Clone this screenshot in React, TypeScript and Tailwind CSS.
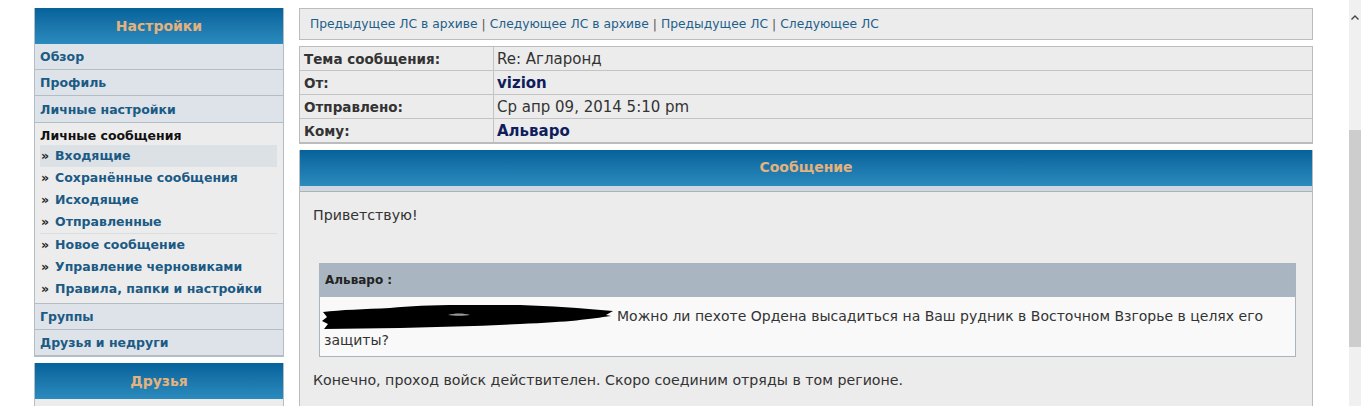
import React from "react";

const verdana = "font-['DejaVu_Sans',Verdana,sans-serif]";
const headerBar =
  "bg-gradient-to-b from-[#05629a] to-[#2b8bbd] text-[#e4b27e] font-bold text-[14px] flex items-center justify-center";

function SideRow({ label, tall = false }: { label: string; tall?: boolean }) {
  return (
    <div
      className={`${tall ? "h-[27px]" : "h-[26px]"} flex items-center pt-[2px] px-[5px] bg-[#dde3e8] border-b border-[#b3bdc6] text-[#1b5a84] font-bold text-[12.5px]`}
    >
      {label}
    </div>
  );
}

function SubLink({ label, active = false }: { label: string; active?: boolean }) {
  return (
    <div
      className={`h-[22px] flex items-center font-bold text-[12.5px] text-[#1b5a84] ${
        active ? "bg-[#dce1e5]" : ""
      }`}
    >
      <span className="text-[#222] mr-[6px] ml-[1px]">»</span>
      {label}
    </div>
  );
}

function Redacted() {
  return (
    <svg
      width="294"
      height="26"
      viewBox="0 0 294 26"
      className="inline-block align-middle -my-[6px] -ml-[4px] mr-[3px]"
    >
      <path
        d="M3 8 C20 6 45 5 70 4 C90 2 110 1 140 1 L200 1 C230 2 260 4 293 7 L286 11 L291 12 C270 15 250 18 200 20 C160 22 120 23 80 24 L4 25 L8 20 L2 17 L7 13 Z"
        fill="#000"
      />
      <path d="M128 11 C134 9 144 9 150 11 C144 12 134 12 128 11 Z" fill="#9a9a9a" />
    </svg>
  );
}

export default function App() {
  return (
    <div className={`h-[406px] w-[1361px] overflow-hidden bg-white flex ${verdana}`}>
      {/* Sidebar */}
      <div className="ml-[34px] mt-[8px] w-[250px] flex flex-col">
        <div className="border border-[#b3bdc6] border-t-0">
          <div className={`${headerBar} h-[36px]`}>Настройки</div>
          <SideRow label="Обзор" />
          <SideRow label="Профиль" />
          <SideRow label="Личные настройки" tall />
          <div className="bg-[#ececec] border-b border-[#b3bdc6] px-[5px] pt-[4px] h-[181px]">
            <div className="h-[18px] flex items-center font-bold text-[12.5px] text-[#111]">Личные сообщения</div>
            <div className="pr-[1px]">
              <SubLink label="Входящие" active />
              <SubLink label="Сохранённые сообщения" />
              <SubLink label="Исходящие" />
              <div className="border-b border-[#d8dde2]">
                <SubLink label="Отправленные" />
              </div>
              <SubLink label="Новое сообщение" />
              <SubLink label="Управление черновиками" />
              <SubLink label="Правила, папки и настройки" />
            </div>
          </div>
          <SideRow label="Группы" />
          <SideRow label="Друзья и недруги" />
        </div>
        <div className="mt-[6px] border border-[#b3bdc6] border-t-0">
          <div className={`${headerBar} h-[36px]`}>Друзья</div>
          <div className="h-[20px] bg-[#ececec]" />
        </div>
      </div>

      {/* Main */}
      <div className="ml-[15px] mt-[8px] w-[1014px] flex flex-col gap-[6px]">
        <div className="h-[32px] bg-[#ececec] border border-[#bcbcbc] flex items-center px-[10px] text-[12.3px] text-[#1f5f8b]">
          <span>Предыдущее ЛС в архиве</span>
          <span className="text-[#555] mx-[4px]">|</span>
          <span>Следующее ЛС в архиве</span>
          <span className="text-[#555] mx-[4px]">|</span>
          <span>Предыдущее ЛС</span>
          <span className="text-[#555] mx-[4px]">|</span>
          <span>Следующее ЛС</span>
        </div>

        <div className="border border-[#bcbcbc] border-b-2 bg-[#ececec] text-[15px]">
          {[
            ["Тема сообщения:", "Re: Агларонд", "text-[#333]"],
            ["От:", "vizion", "font-bold text-[#0f1d5c]"],
            ["Отправлено:", "Ср апр 09, 2014 5:10 pm", "text-[#333]"],
            ["Кому:", "Альваро", "font-bold text-[#0f1d5c]"],
          ].map(([k, v, cls], i) => (
            <div
              key={k}
              className={`flex ${i === 3 ? "h-[23px]" : "h-[24px]"} ${i < 3 ? "border-b border-[#c4c4c4]" : ""}`}
            >
              <div className="w-[194px] border-r border-[#c4c4c4] px-[4px] pt-[3px] flex items-center font-bold text-[13.5px] text-[#333]">
                {k}
              </div>
              <div className={`flex-1 px-[3px] pt-[3px] flex items-center ${cls}`}>{v}</div>
            </div>
          ))}
        </div>

        <div className="border-x border-[#bcbcbc] bg-[#ececec] h-[260px]">
          <div className={`${headerBar} h-[36px] text-[13px]`}>Сообщение</div>
          <div className="h-[6px] bg-[#cfd8e0] border-b border-[#a9b2bb]" />
          <div className="px-[13px] pt-[14px] text-[14.2px] text-[#333]">
            <div className="h-[20px] flex items-center">Приветствую!</div>
            <div className="ml-[6px] mr-[3px] mt-[37px] border border-[#a9b4bf]">
              <div className="h-[33px] bg-[#a9b6c1] flex items-center px-[5px] text-[12px] font-bold text-[#222]">
                Альваро :
              </div>
              <div className="bg-[#f9f9f9] px-[4px] pt-[7px] pb-[4px] leading-[24px] text-[14px]">
                <Redacted />Можно ли пехоте Ордена высадиться на Ваш рудник в Восточном Взгорье в целях его защиты?
              </div>
            </div>
            <div className="mt-[14px] h-[20px] flex items-center">
              Конечно, проход войск действителен. Скоро соединим отряды в том регионе.
            </div>
          </div>
        </div>
      </div>

      {/* Scrollbar */}
      <div className="ml-auto w-[12px] h-full bg-[#f0f0f0] flex flex-col items-center">
        <div className="h-[34px] flex items-center justify-center">
          <svg width="8" height="5" viewBox="0 0 8 5">
            <path d="M0.5 4.5 L4 1 L7.5 4.5" stroke="#444" strokeWidth="1.4" fill="none" />
          </svg>
        </div>
        <div className="mt-[96px] w-full h-[217px] bg-[#cdcdcd]" />
      </div>
    </div>
  );
}
